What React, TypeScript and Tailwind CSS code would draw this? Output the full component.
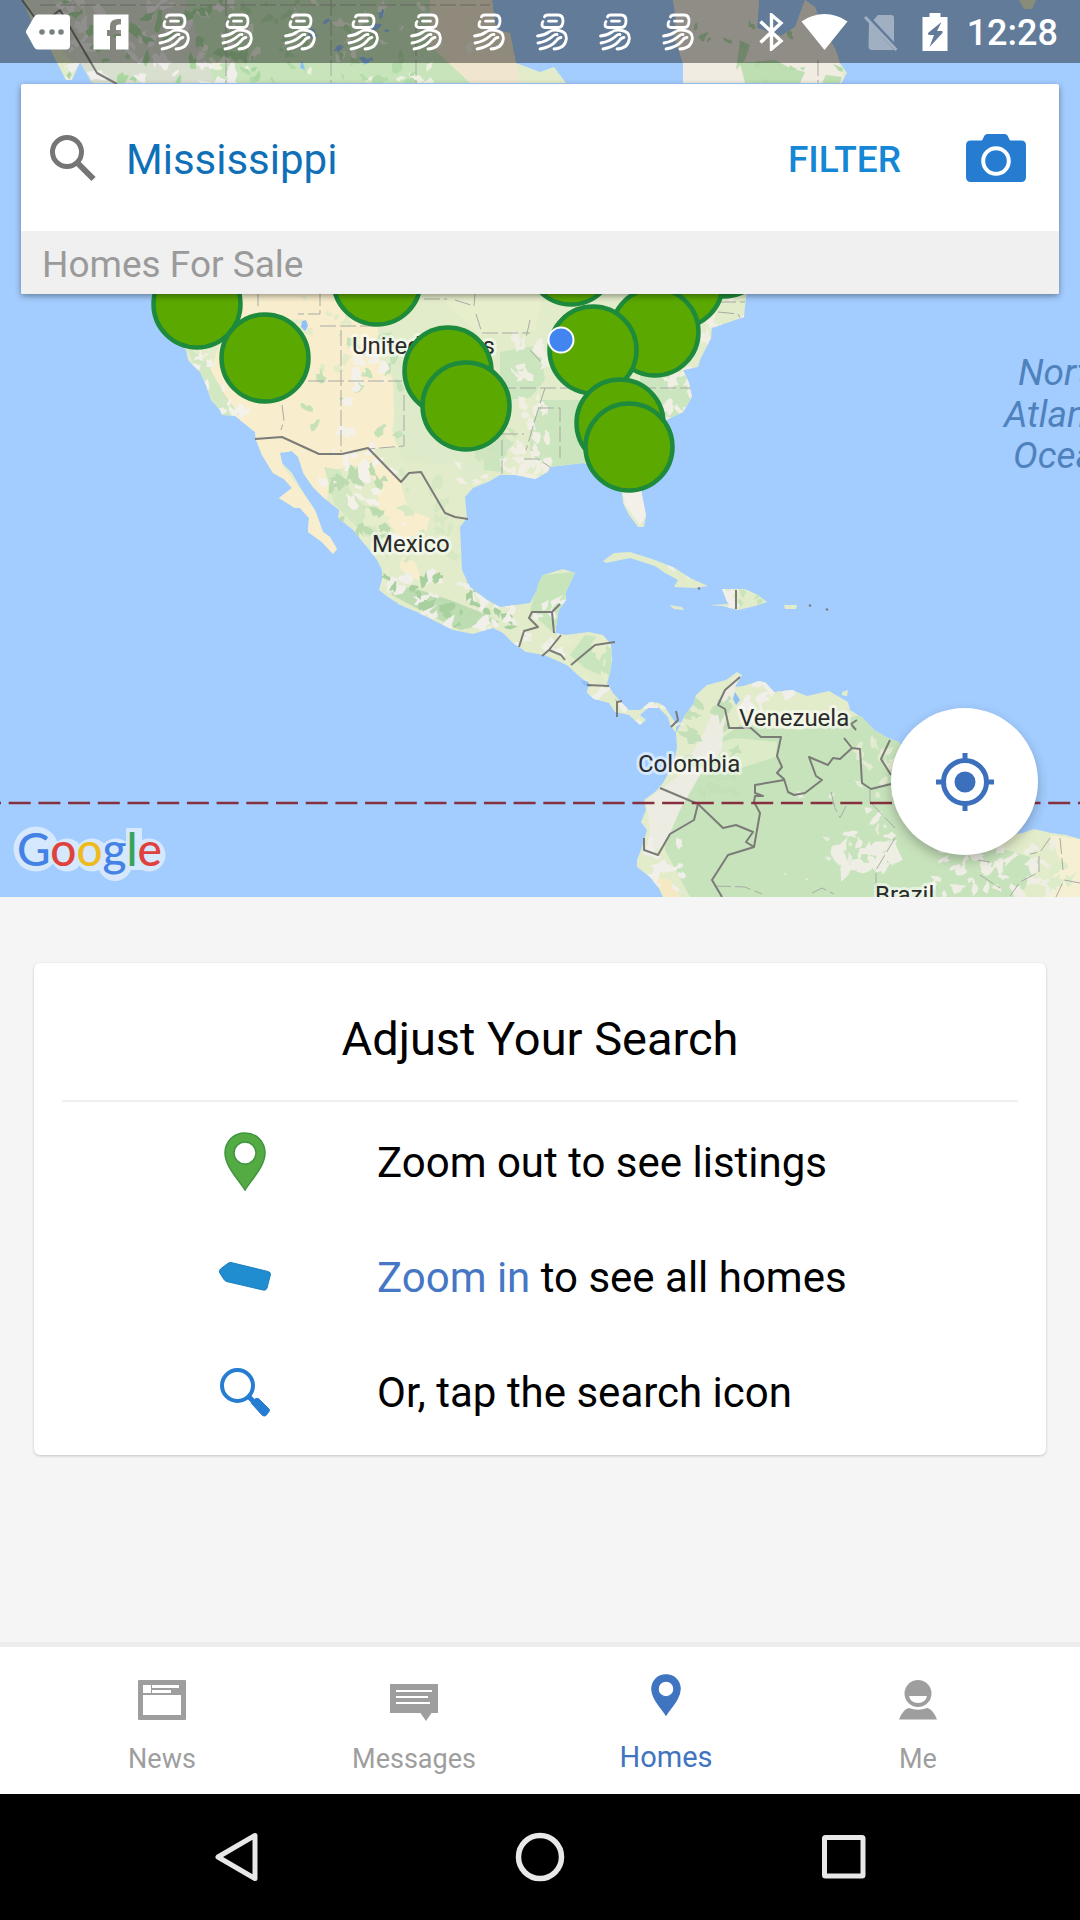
import { useState } from "react";
import type { ReactNode } from "react";

/* ---------- map data ---------- */

const NORTH_AMERICA =
  "M140 84 L150 290 L172 335 L186 350 L188 360 L200 372 L206 385 L211 400 L220 410 L222 415 L235 416 L255 432 L256 440 L262 455 L273 473 L284 479 L292 488 L279 498 L295 508 L300 508 L309 518 L308 532 L322 542 L333 554 L337 549 L330 537 L323 532 L315 510 L307 498 L300 487 L292 473 L282 463 L280 453 L292 451 L298 457 L303 473 L313 487 L323 497 L330 503 L339 510 L338 518 L353 530 L367 547 L377 560 L382 570 L382 580 L379 590 L388 597 L400 605 L417 612 L433 620 L453 630 L473 634 L493 628 L503 633 L513 643 L526 652 L544 655 L567 665 L580 677 L589 683 L587 693 L594 699 L609 703 L615 712 L629 715 L640 725 L646 720 L640 715 L648 708 L659 708 L668 717 L670 725 L676 733 L682 722 L676 724 L665 707 L659 703 L650 702 L640 710 L629 710 L622 703 L613 693 L607 683 L610 673 L612 660 L611 645 L603 635 L589 632 L565 635 L555 633 L559 610 L566 600 L566 592 L575 573 L563 569 L543 575 L539 582 L537 590 L530 603 L500 607 L487 600 L470 587 L462 570 L460 527 L467 518 L465 497 L473 488 L488 482 L500 475 L515 475 L535 479 L548 472 L550 467 L583 463 L610 470 L622 493 L623 503 L629 515 L638 527 L644 527 L646 515 L642 495 L638 470 L645 440 L666 420 L683 412 L692 397 L689 383 L683 370 L698 367 L700 360 L711 338 L712 328 L744 317 L746 297 L750 280 L740 84 Z";

const SOUTH_AMERICA =
  "M676 727 L681 723 L685 715 L694 703 L696 695 L707 685 L726 680 L737 672 L742 675 L735 687 L744 686 L759 681 L766 683 L774 692 L792 690 L807 696 L829 691 L848 702 L850 710 L863 718 L874 730 L888 738 L899 742 L930 790 L970 840 L1023 833 L1034 829 L1051 833 L1066 835 L1080 839 V897 H663 L659 888 L650 877 L637 867 L637 860 L642 847 L647 830 L641 822 L646 810 L644 800 L655 792 L663 783 L674 763 L677 747 L676 733 Z";

const CANADA =
  "M22 0 L31 20 L42 30 L52 53 L66 80 L72 80 L80 62 L92 83 H566 L554 67 L540 72 L516 63 L510 33 L496 30 L492 0 Z M673 0 L676 20 L674 37 L683 63 L683 83 H841 L847 73 L840 63 L836 50 L822 27 L815 7 L805 0 L795 27 L781 36 L757 28 L759 0 Z M1019 0 L1024 9 L1032 9 L1036 0 Z";

const ISLANDS =
  "M603 561 L614 553 L630 552 L655 560 L675 568 L690 578 L708 586 L695 588 L674 587 L678 580 L665 573 L655 566 L630 558 L606 563 Z M669 605 L682 607 L684 610 L674 609 Z M709 605 L728 604 L722 589 L745 589 L758 595 L767 602 L755 606 L738 610 L722 606 Z M784 605 L797 605 L796 609 L785 609 Z M842 692 L848 690 L847 696 L842 695 Z";

const LAND = [NORTH_AMERICA, SOUTH_AMERICA, CANADA, ISLANDS].join(" ");

const REGIONS: { d: string; fill: string }[] = [
  { d: "M240 290 H375 L380 360 L400 390 L392 430 L400 447 L368 449 L345 455 L320 454 L280 437 L255 437 L240 420 L205 385 Z", fill: "#f8eecd" },
  { d: "M255 437 L282 437 L320 454 L345 455 L362 465 L330 470 L327 500 L310 490 L298 456 L280 452 L283 466 L312 505 L338 550 L330 556 L276 500 Z", fill: "#f8eecd" },
  { d: "M345 458 L370 449 L400 480 L408 510 L430 518 L425 535 L404 545 L380 510 L375 480 Z", fill: "#f8eecd" },
  { d: "M403 557 L415 562 L422 580 L408 578 L399 566 Z", fill: "#f8eecd" },
  { d: "M392 355 L480 355 L500 440 L485 475 L470 487 L455 465 L405 462 L395 440 Z", fill: "#deebcb" },
  { d: "M500 352 L540 345 L545 380 L530 398 L500 400 Z M484 430 L510 440 L502 472 L484 470 Z M540 400 H690 L640 470 L530 465 L530 430 Z M640 375 H690 V400 H640 Z", fill: "#cbe5be" },
  { d: "M186 345 L205 360 L225 395 L240 415 L222 415 L200 380 Z", fill: "#d2e8c3" },
  { d: "M432 290 L545 290 L535 330 L480 335 Z", fill: "#e7eecc" },
  { d: "M324 467 L340 470 L350 490 L368 510 L380 540 L390 560 L360 530 L335 505 Z", fill: "#d3e8c2" },
  { d: "M390 585 L420 590 L450 600 L480 612 L500 622 L460 630 L420 610 L392 595 Z", fill: "#bddcb2" },
  { d: "M542 575 L575 572 L566 595 L556 635 L530 612 L535 590 Z", fill: "#c7e4bb" },
  { d: "M585 635 L611 640 L611 680 L585 668 L570 655 Z", fill: "#c9e5bd" },
  { d: "M622 490 H646 L647 515 L640 525 L625 505 Z", fill: "#f2f0e8" },
  { d: "M663 800 L690 760 L740 725 L800 730 L860 715 L930 750 L990 845 L1040 860 L1020 897 H690 L665 850 Z", fill: "#c7e3bc" },
  { d: "M712 745 L735 738 L777 742 L776 757 L735 770 L715 760 Z", fill: "#dcebc8" },
  { d: "M1050 835 L1080 839 V897 H1045 L1060 860 Z", fill: "#f5efd4" },
  { d: "M646 800 L680 775 L705 730 L718 700 L738 674 L735 690 L724 720 L722 750 L700 775 L680 810 L665 845 L645 855 L650 830 Z", fill: "#ecece2" },
  { d: "M650 876 L670 880 L680 897 H662 Z", fill: "#f5e9c4" },
  { d: "M22 0 H200 L230 83 H92 L70 60 L45 30 Z", fill: "#d9dfcf" },
  { d: "M185 0 H430 L500 83 H215 Z", fill: "#c7e4bb" },
  { d: "M430 0 H492 L496 30 L510 33 L520 83 H470 L430 45 Z", fill: "#f0e6cf" },
  { d: "M673 0 H820 L845 83 H683 Z", fill: "#f0ece2" },
  { d: "M740 63 L775 60 L790 68 L805 72 L800 83 H745 Z M740 40 L750 45 L745 60 L736 70 Z M826 75 L842 77 L840 83 H822 Z", fill: "#bddfb1" },
];

type Zone = { x: number; y: number; w: number; h: number; n: number; size: number; fill: string };

const ZONES: Zone[] = [
  { x: 60, y: 0, w: 180, h: 84, n: 60, size: 9, fill: "#f1efec" },
  { x: 60, y: 0, w: 200, h: 84, n: 40, size: 8, fill: "#a9d7a0" },
  { x: 200, y: 0, w: 300, h: 84, n: 34, size: 7, fill: "#eef1df" },
  { x: 220, y: 0, w: 200, h: 84, n: 30, size: 7, fill: "#b4dcaa" },
  { x: 300, y: 10, w: 140, h: 70, n: 9, size: 6, fill: "#8fc0f5" },
  { x: 680, y: 20, w: 160, h: 64, n: 14, size: 6, fill: "#b4dcaa" },
  { x: 290, y: 295, w: 60, h: 100, n: 22, size: 7, fill: "#e3ecc9" },
  { x: 300, y: 310, w: 100, h: 130, n: 18, size: 8, fill: "#c5e1b7" },
  { x: 345, y: 345, w: 40, h: 60, n: 12, size: 9, fill: "#f3f1ea" },
  { x: 190, y: 350, w: 60, h: 65, n: 20, size: 6, fill: "#f3f1ea" },
  { x: 315, y: 430, w: 60, h: 60, n: 12, size: 8, fill: "#f3f1ea" },
  { x: 330, y: 465, w: 55, h: 75, n: 20, size: 10, fill: "#bcdcb0" },
  { x: 345, y: 460, w: 60, h: 80, n: 12, size: 8, fill: "#f3f1ea" },
  { x: 340, y: 510, w: 50, h: 80, n: 18, size: 8, fill: "#e6edcc" },
  { x: 400, y: 470, w: 60, h: 90, n: 14, size: 9, fill: "#d6e8c4" },
  { x: 380, y: 575, w: 130, h: 55, n: 42, size: 9, fill: "#f1efe9" },
  { x: 385, y: 575, w: 130, h: 55, n: 36, size: 8, fill: "#a8d09f" },
  { x: 505, y: 600, w: 60, h: 55, n: 20, size: 8, fill: "#f1efe9" },
  { x: 515, y: 340, w: 35, h: 130, n: 30, size: 9, fill: "#f1efe4" },
  { x: 440, y: 460, w: 110, h: 25, n: 14, size: 8, fill: "#f1efe4" },
  { x: 480, y: 340, w: 70, h: 120, n: 12, size: 9, fill: "#cfe5c0" },
  { x: 660, y: 370, w: 35, h: 50, n: 12, size: 8, fill: "#f1efe4" },
  { x: 695, y: 295, w: 55, h: 70, n: 20, size: 8, fill: "#f1efe4" },
  { x: 560, y: 635, w: 60, h: 55, n: 18, size: 8, fill: "#e6edcc" },
  { x: 590, y: 680, w: 90, h: 50, n: 24, size: 9, fill: "#f1efe9" },
  { x: 600, y: 690, w: 80, h: 40, n: 10, size: 4, fill: "#bcdcb0" },
  { x: 680, y: 685, w: 60, h: 110, n: 24, size: 10, fill: "#c4e0b8" },
  { x: 735, y: 680, w: 120, h: 40, n: 16, size: 9, fill: "#e3ecc9" },
  { x: 735, y: 680, w: 60, h: 30, n: 8, size: 9, fill: "#f1efe9" },
  { x: 850, y: 705, w: 50, h: 90, n: 14, size: 8, fill: "#e3ecd2" },
  { x: 640, y: 840, w: 45, h: 50, n: 14, size: 9, fill: "#f1efe9" },
  { x: 835, y: 845, w: 60, h: 25, n: 24, size: 9, fill: "#efeee4" },
  { x: 850, y: 810, w: 50, h: 60, n: 14, size: 7, fill: "#efeee4" },
  { x: 780, y: 790, w: 120, h: 90, n: 12, size: 4, fill: "#e9ecdc" },
  { x: 930, y: 840, w: 130, h: 55, n: 46, size: 8, fill: "#efeee4" },
  { x: 1050, y: 860, w: 30, h: 37, n: 6, size: 8, fill: "#dcebc8" },
  { x: 700, y: 585, w: 40, h: 25, n: 8, size: 7, fill: "#f1efe9" },
  { x: 615, y: 550, w: 90, h: 40, n: 10, size: 6, fill: "#f1efe9" },
  { x: 740, y: 590, w: 25, h: 16, n: 5, size: 8, fill: "#c7e4bb" },
];

const STATE_LINES =
  "M258 290 V310 M320 290 V314 H298 M320 326 H380 M341 330 V452 M308 381 H402 M404 395 V446 L368 449 M282 405 L284 420 L281 430 M424 299 H447 M455 300 L474 306 L475 294 M476 314 L482 333 H530 M530 320 L526 338 M500 388 H590 M502 434 H524 M502 440 V474 M538 408 H560 V458 M524 459 H538 L550 467 M545 388 L538 410 L532 430 L526 450 M640 388 H690 M530 350 L541 362 M718 312 L738 314 L742 322 M720 302 H745 M715 886 L745 887 L762 894 M812 893 L822 888 L834 894 M831 792 L835 808 M846 806 L840 818 L835 808 M870 803 V790 M871 803 L895 828 M895 838 L876 870 V888 M1060 838 L1063 870 M1050 838 L1040 852 L1030 854 M1039 856 V872 L1020 882 L1010 896 M978 860 L990 862 M980 875 L1000 888 M1080 883 L1064 880 L1056 897 M226 0 V83 M331 0 V83 M416 20 V83 M40 5 H490 M818 60 V83";

const COUNTRY_LINES =
  "M255 439 L282 437 L319 454 H342 L368 448 L401 482 L409 473 L421 472 L445 513 L455 517 L468 519 M22 0 L40 25 L60 10 L97 73 L117 84 M519 647 L524 631 L538 627 L529 618 L532 612 H552 L560 604 M552 612 L554 633 M561 635 L549 650 L542 656 M549 650 L561 655 L565 660 M571 665 L595 645 L615 642 M587 685 L609 686 M622 701 L617 702 V717 M676 711 L678 720 L671 727 M740 677 L725 690 L718 705 L725 709 L729 728 H751 L761 737 H781 L777 756 L782 767 L777 773 L784 779 L788 792 L794 795 L805 793 L822 780 L816 776 L809 757 L828 765 L833 758 L840 759 L852 748 L860 749 L862 783 L871 789 L891 784 M844 738 L852 748 M857 720 L851 724 L856 730 M890 740 L881 759 L891 775 M784 780 L755 785 V793 L763 796 L755 796 L754 802 L760 813 L754 847 L728 855 L712 880 L722 897 M660 788 L698 804 L723 828 L736 825 L753 832 L746 842 L754 847 M698 804 L694 820 L670 834 L658 855 L644 850 V838 M736 590 V609 M809 605 L811 606 M826 609 L828 610 M698 588 L700 589";

const LISTINGS = [
  { x: 724, y: 253 },
  { x: 679, y: 284 },
  { x: 655, y: 332 },
  { x: 571, y: 261 },
  { x: 593, y: 350 },
  { x: 620, y: 423 },
  { x: 629, y: 447 },
  { x: 197, y: 304 },
  { x: 265, y: 358 },
  { x: 377, y: 281 },
  { x: 448, y: 371 },
  { x: 466, y: 406 },
];

const PLACES = [
  { name: "United States", x: 352, y: 354 },
  { name: "Mexico", x: 372, y: 552 },
  { name: "Venezuela", x: 739, y: 726 },
  { name: "Colombia", x: 638, y: 772 },
  { name: "Brazil", x: 875, y: 903 },
];

const LOGO = [
  { letter: "G", fill: "#4482e6" },
  { letter: "o", fill: "#df413c" },
  { letter: "o", fill: "#efba1e" },
  { letter: "g", fill: "#4482e6" },
  { letter: "l", fill: "#3aa35b" },
  { letter: "e", fill: "#df413c" },
];

function speckles(zone: Zone, seed: number): string {
  let s = seed * 7919 + 17;
  const rand = () => {
    s = (s * 1103515245 + 12345) % 2147483648;
    return s / 2147483648;
  };
  let d = "";
  for (let i = 0; i < zone.n; i++) {
    const cx = zone.x + rand() * zone.w;
    const cy = zone.y + rand() * zone.h;
    const tilt = rand() * Math.PI;
    const long = zone.size * (0.5 + rand() * 0.9);
    for (let k = 0; k < 9; k++) {
      const a = (k / 9) * Math.PI * 2;
      const r = 0.3 + rand() * 0.9;
      const px = Math.cos(a) * long * r;
      const py = Math.sin(a) * long * 0.55 * r;
      const x = cx + px * Math.cos(tilt) - py * Math.sin(tilt);
      const y = cy + px * Math.sin(tilt) + py * Math.cos(tilt);
      d += `${k === 0 ? "M" : "L"}${x.toFixed(1)} ${y.toFixed(1)}`;
    }
    d += "Z";
  }
  return d;
}

function MapCanvas() {
  return (
    <svg
      className="absolute inset-0 h-full w-full font-['Roboto',sans-serif]"
      viewBox="0 0 1080 897"
      preserveAspectRatio="xMidYMid slice"
      role="img"
      aria-label="Map of listings"
    >
      <defs>
        <clipPath id="land">
          <path d={LAND} />
        </clipPath>
      </defs>
      <rect width="1080" height="897" fill="#a3cdff" />
      <path d={LAND} fill="#e2ecca" />
      <g clipPath="url(#land)">
        {REGIONS.map((r) => (
          <path key={r.d} d={r.d} fill={r.fill} />
        ))}
        {ZONES.map((z, i) => (
          <path key={i} d={speckles(z, i + 1)} fill={z.fill} />
        ))}
        <path d={STATE_LINES} fill="none" stroke="#a9aaa5" strokeWidth="1" strokeDasharray="16 4" />
      </g>
      <path d="M302 321 l4 -1 l2 6 l-3 5 l-4 -4 z M580 680 l8 2 l3 5 l-6 -1 z M735 692 l5 8 l-4 5 l-3 -6 z" fill="#8fc0f5" />
      <path d={COUNTRY_LINES} fill="none" stroke="#7b7b78" strokeWidth="2" strokeLinejoin="round" />
      <path d="M-21 803 H1080" stroke="#86303f" strokeWidth="2.5" strokeDasharray="22 7.7" />
      {PLACES.map((p) => (
        <text
          key={p.name}
          x={p.x}
          y={p.y}
          fontSize="24"
          fill="#2b2b2b"
          stroke="#ffffff"
          strokeOpacity="0.5"
          strokeWidth="6"
          strokeLinejoin="round"
          paintOrder="stroke"
        >
          {p.name}
        </text>
      ))}
      <g fontSize="37" fontStyle="italic" fill="#4f82bd">
        <text x="1018" y="385">North</text>
        <text x="1004" y="427">Atlantic</text>
        <text x="1013" y="468">Ocean</text>
      </g>
      {LISTINGS.map((l) => (
        <circle key={`${l.x}-${l.y}`} cx={l.x} cy={l.y} r="43.5" fill="#5ba800" stroke="#1d8a3c" strokeWidth="4.5" />
      ))}
      <circle cx="561" cy="340" r="12.5" fill="#4285f0" stroke="#ffffff" strokeWidth="2" />
      <g fill="#d6e8fc">
        <circle cx="36" cy="849" r="22.500" />
        <circle cx="67" cy="855" r="16.500" />
        <circle cx="92" cy="855" r="16.500" />
        <circle cx="116" cy="855" r="16.500" />
        <circle cx="115" cy="864" r="17" />
        <rect x="126" y="828" width="16" height="42" rx="1" />
        <circle cx="149" cy="855" r="16.500" />
      </g>
      <text x="17" y="866" fontSize="46" fontWeight="500" fontFamily="Lato, sans-serif">
        {LOGO.map((l, i) => (
          <tspan key={i} fill={l.fill}>
            {l.letter}
          </tspan>
        ))}
      </text>
    </svg>
  );
}

/* ---------- icons ---------- */

function YiIcon() {
  return (
    <svg className="h-[38px] w-[32px]" viewBox="0 0 32 38" fill="none" stroke="#fff" strokeWidth="2.8" strokeLinecap="round" strokeLinejoin="round">
      <path d="M8.500 4 Q9 2 12 2 H22 Q27 2 27 8 Q27 14.500 22 14.500 H9 Q6 14.500 6 11.500 Q6 9.500 7 8.500 M12.500 8.200 H20.500" />
      <path d="M1.500 23 Q8 22.500 13 19 Q16 16.500 23 17.500 Q31 19 30.300 26 Q29 35.500 18 36" />
      <path d="M2 30 Q11 28.500 17 23 Q19 21.200 21 21.500" />
      <path d="M4 36 Q15 34 20 28 Q22.500 24.500 25 24.500" />
    </svg>
  );
}

function PinIcon({ className, fill, stroke }: { className: string; fill: string; stroke?: string }) {
  return (
    <svg className={className} viewBox="0 0 42 59">
      <path
        d="M21 1 C9.500 1 1 9.500 1 21 C1 34 14 47 21 58 C28 47 41 34 41 21 C41 9.500 32.500 1 21 1 Z M21 10 A11 11 0 1 1 21 32 A11 11 0 1 1 21 10 Z"
        fill={fill}
        stroke={stroke ?? fill}
        strokeWidth="1.5"
        fillRule="evenodd"
      />
    </svg>
  );
}

/* ---------- sections ---------- */

function StatusBar() {
  return (
    <div className="relative flex h-[63px] items-center justify-between bg-black/40 pr-[22px] pl-4">
      <div className="flex items-center">
        <div className="flex w-[63px] justify-center">
          <svg className="h-[36px] w-[46px]" viewBox="0 0 46 36">
            <path d="M12.500 0.500 H41 Q45 0.500 45 4.500 V31.500 Q45 35.500 41 35.500 H12.500 Q10.500 35.500 9 33 L1 18.500 V17 L9 3 Q10.500 0.500 12.500 0.500 Z" fill="#fff" />
            <g fill="#77837a">
              <circle cx="17" cy="18" r="2.800" />
              <circle cx="27" cy="18" r="2.800" />
              <circle cx="36" cy="18" r="2.800" />
            </g>
          </svg>
        </div>
        <div className="flex w-[63px] justify-center">
          <svg className="size-[36px]" viewBox="0 0 36 36">
            <path d="M0.500 0.500 H35.500 V35.500 H23 V22 H28 V16 H23 V13 Q23 10.500 25.500 10.500 H28 V5 H24 Q17 5.500 17 12 V16 H14 V22 H17 V35.500 H0.500 Z" fill="#fff" />
          </svg>
        </div>
        {Array.from({ length: 9 }, (_, i) => (
          <div key={i} className="flex w-[63px] justify-center">
            <YiIcon />
          </div>
        ))}
      </div>
      <div className="flex items-center">
        <svg className="mr-[17px] h-[38px] w-[25px]" viewBox="0 0 25 38" fill="none" stroke="#fff" strokeWidth="3.400">
          <path d="M1.500 8.500 L22 28 L12.500 36 V2 L22 10 L1.500 29.500" />
        </svg>
        <svg className="mr-4 h-[38px] w-[47px]" viewBox="0 0 47 38">
          <path d="M0.500 8.500 Q11 1 23.500 1 Q36 1 46.500 8.500 L23.500 37 Z" fill="#fff" />
        </svg>
        <svg className="mr-6 h-[38px] w-[34px]" viewBox="0 0 34 38">
          <path d="M5 10 L30 37 H7 Q4.500 36 4.500 34 Z M14 2 H27 Q30 2 30 5 V29 L9.500 7 Z" fill="#fff" opacity="0.4" />
          <path d="M1 4 L32.500 37" stroke="#fff" strokeWidth="3" opacity="0.4" />
        </svg>
        <svg className="mr-[19px] h-[38px] w-[26px]" viewBox="0 0 26 38">
          <path d="M7.500 0 H18.500 V4 H25.500 V38 H0.500 V4 H7.500 Z M19.500 9 L6 20 L6.500 22 H12 L7.500 34 L20.500 20 V18 H15 Z" fill="#fff" fillRule="evenodd" />
        </svg>
        <time className="pt-0.5 text-[36px] leading-[42px] font-medium text-white">12:28</time>
      </div>
    </div>
  );
}

function SearchPanel() {
  const [query, setQuery] = useState("Mississippi");
  return (
    <form className="relative mx-[21px] mt-[21px] overflow-hidden rounded-xs bg-white shadow-[0_2px_6px_rgba(0,0,0,0.4)]" onSubmit={(e) => e.preventDefault()}>
      <div className="flex h-[147px] items-center pr-8 pl-7">
        <label htmlFor="place" className="shrink-0">
          <span className="sr-only">Search place</span>
          <svg className="h-[48px] w-[48px]" viewBox="0 0 48 48" fill="none" stroke="#757575">
            <circle cx="18" cy="18" r="14.500" strokeWidth="5" />
            <path d="M28.500 29 L44.500 45" strokeWidth="6" />
          </svg>
        </label>
        <input
          id="place"
          type="text"
          value={query}
          onChange={(e) => setQuery(e.target.value)}
          className="ml-[29px] min-w-0 flex-1 bg-transparent pt-1 text-[42px] leading-[56px] text-[#0f70b7] outline-none"
        />
        <button type="button" className="mr-[64px] pt-1 text-[37px] leading-[48px] font-medium text-[#1587d4]">
          FILTER
        </button>
        <button type="button" aria-label="Camera search" className="shrink-0">
          <svg className="h-[50px] w-[62px]" viewBox="0 0 62 50">
            <path d="M6 7.500 H17 L19.500 2.500 Q20.500 1 22 1 H40 Q41.500 1 42.500 2.500 L45 7.500 H56 Q61 7.500 61 12.500 V44 Q61 49 56 49 H6 Q1 49 1 44 V12.500 Q1 7.500 6 7.500 Z" fill="#257cd0" />
            <circle cx="31" cy="28" r="12.800" fill="none" stroke="#fff" strokeWidth="4" />
          </svg>
        </button>
      </div>
      <p className="bg-[#f0f0f0] px-[21px] pt-2.5 pb-1.5 text-[37px] leading-[47px] text-[#9a9a9a]">Homes For Sale</p>
    </form>
  );
}

function Tip({ icon, children }: { icon: ReactNode; children: ReactNode }) {
  return (
    <li className="flex h-[115px] items-center">
      <span className="ml-[183px] flex w-[56px] shrink-0 justify-center">{icon}</span>
      <span className="ml-[104px] pt-0.5 text-[42px] leading-[56px] text-black">{children}</span>
    </li>
  );
}

function Tab({ label, icon, active = false }: { label: string; icon: ReactNode; active?: boolean }) {
  return (
    <a
      href={`#${label.toLowerCase()}`}
      aria-current={active ? "page" : undefined}
      className="flex flex-col items-center pt-[27px]"
    >
      <span className="flex h-[52px] items-center justify-center">{icon}</span>
      <span className={active ? "mt-[13px] text-[29px] leading-9 text-[#4275c0]" : "mt-[13px] text-[27px] leading-10 text-[#9e9e9e]"}>{label}</span>
    </a>
  );
}

export default function App() {
  return (
    <div className="flex min-h-screen flex-col bg-[#f5f5f5] font-['Roboto',sans-serif]">
      <section className="relative h-[897px] overflow-hidden">
        <MapCanvas />
        <StatusBar />
        <SearchPanel />
        <button
          type="button"
          aria-label="My location"
          className="absolute right-[42px] bottom-[42px] flex size-[147px] items-center justify-center rounded-full bg-white shadow-[0_5px_12px_rgba(0,0,0,0.25)]"
        >
          <svg className="size-[58px]" viewBox="0 0 58 58" fill="none" stroke="#3c70bd" strokeWidth="5">
            <circle cx="29" cy="29" r="21.500" />
            <circle cx="29" cy="29" r="10.500" fill="#3c70bd" stroke="none" />
            <path d="M29 0 V8 M29 50 V58 M0 29 H8 M50 29 H58" />
          </svg>
        </button>
      </section>

      <main className="flex-1 px-[34px] pt-[66px]">
        <section className="rounded-md bg-white px-7 pb-1 shadow-[0_1px_3px_rgba(0,0,0,0.2)]">
          <h1 className="border-b-2 border-[#efefef] pt-[48px] pb-[33px] text-center text-[47px] leading-[56px] text-black">Adjust Your Search</h1>
          <ul className="-ml-7 flex flex-col py-0.5">
            <Tip icon={<PinIcon className="h-[59px] w-[42px]" fill="#55ab43" stroke="#3f9440" />}>Zoom out to see listings</Tip>
            <Tip
              icon={
                <svg className="h-[31px] w-[54px]" viewBox="0 0 54 31">
                  <path d="M13 1.500 L50 10.500 Q53 11.500 52.500 13.500 L49 27 Q48 30 45 29 L8.500 20.500 Q7 20 6 18.500 L1.500 11.500 Q1 9.500 2.500 8 L9 3 Q11 1.200 13 1.500 Z" fill="#208dd0" stroke="#1a7fc0" />
                </svg>
              }
            >
              <button type="button" className="text-[#4577c4]">Zoom in</button> to see all homes
            </Tip>
            <Tip
              icon={
                <svg className="h-[50px] w-[52px]" viewBox="0 0 52 50" stroke="#257cd0">
                  <circle cx="18.500" cy="18.500" r="15.500" strokeWidth="4" fill="none" />
                  <path d="M29 29 L35 35" strokeWidth="5" />
                  <path d="M33 37 Q32 36 33 35 L36 32 Q38 30.500 40 32 L50 42 Q51 43 50 44.500 L47 48.500 Q45.500 49.500 43.500 48.500 Z" fill="#257cd0" strokeWidth="1" />
                </svg>
              }
            >
              Or, tap the search icon
            </Tip>
          </ul>
        </section>
      </main>

      <nav className="grid h-[152px] grid-cols-4 border-t-[5px] border-[#ececec] bg-white px-9" aria-label="Sections">
        <Tab
          label="News"
          icon={
            <svg className="h-[40px] w-[48px]" viewBox="0 0 48 40">
              <rect width="48" height="40" rx="1" fill="#9e9e9e" />
              <g fill="#fff">
                <rect x="5" y="5" width="8" height="8" />
                <rect x="14" y="5" width="27" height="3" />
                <rect x="14" y="10" width="19" height="3" />
                <rect x="5" y="15" width="38" height="20" />
              </g>
            </svg>
          }
        />
        <Tab
          label="Messages"
          icon={
            <svg className="mt-1 h-[37px] w-[48px]" viewBox="0 0 48 37">
              <path d="M0 0 H48 V29 H41.500 L36 37 L30.500 29 H0 Z" fill="#9e9e9e" />
              <path d="M6 7 H42 M6 13 H38 M6 19 H40" stroke="#fff" strokeWidth="2" />
            </svg>
          }
        />
        <Tab label="Homes" active icon={<PinIcon className="mb-2.5 h-[42px] w-[30px]" fill="#3f74c1" />} />
        <Tab
          label="Me"
          icon={
            <svg className="h-[40px] w-[38px]" viewBox="0 0 38 40" fill="#9e9e9e">
              <circle cx="19" cy="13.500" r="13.500" />
              <path d="M10 16 H28 Q26.500 23 19 23 Q11.500 23 10 16 Z" fill="#fff" />
              <path d="M0 39.500 Q4 29 10 28 Q19 31.500 28 28 Q34 29 38 39.500 Z" />
            </svg>
          }
        />
      </nav>

      <div className="flex h-[126px] items-center justify-between bg-black px-[210px]">
        <button type="button" aria-label="Back">
          <svg className="size-[52px]" viewBox="0 0 52 52" fill="none" stroke="#e8e8e8" strokeWidth="5" strokeLinejoin="round">
            <path d="M8 26 L45 4.500 V47.500 Z" />
          </svg>
        </button>
        <button type="button" aria-label="Home">
          <svg className="size-[52px]" viewBox="0 0 52 52" fill="none" stroke="#e8e8e8" strokeWidth="5.500">
            <circle cx="26" cy="26" r="21.500" />
          </svg>
        </button>
        <button type="button" aria-label="Recent apps">
          <svg className="size-[52px]" viewBox="0 0 52 52" fill="none" stroke="#e8e8e8" strokeWidth="5" strokeLinejoin="round">
            <rect x="6.500" y="6.500" width="38.500" height="38.500" rx="1" />
          </svg>
        </button>
      </div>
    </div>
  );
}
